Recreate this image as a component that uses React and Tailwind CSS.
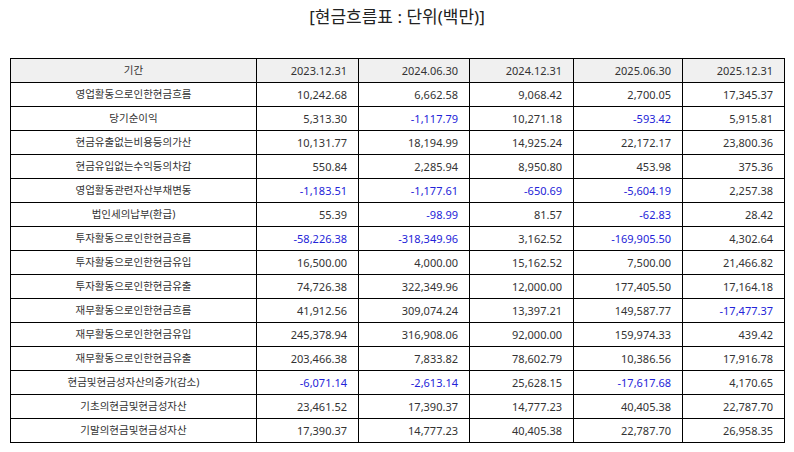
import React from "react";

const cols = ["2023.12.31", "2024.06.30", "2024.12.31", "2025.06.30", "2025.12.31"];
const rows = [
  ["영업활동으로인한현금흐름", "10,242.68", "6,662.58", "9,068.42", "2,700.05", "17,345.37"],
  ["당기순이익", "5,313.30", "-1,117.79", "10,271.18", "-593.42", "5,915.81"],
  ["현금유출없는비용등의가산", "10,131.77", "18,194.99", "14,925.24", "22,172.17", "23,800.36"],
  ["현금유입없는수익등의차감", "550.84", "2,285.94", "8,950.80", "453.98", "375.36"],
  ["영업활동관련자산부채변동", "-1,183.51", "-1,177.61", "-650.69", "-5,604.19", "2,257.38"],
  ["법인세의납부(환급)", "55.39", "-98.99", "81.57", "-62.83", "28.42"],
  ["투자활동으로인한현금흐름", "-58,226.38", "-318,349.96", "3,162.52", "-169,905.50", "4,302.64"],
  ["투자활동으로인한현금유입", "16,500.00", "4,000.00", "15,162.52", "7,500.00", "21,466.82"],
  ["투자활동으로인한현금유출", "74,726.38", "322,349.96", "12,000.00", "177,405.50", "17,164.18"],
  ["재무활동으로인한현금흐름", "41,912.56", "309,074.24", "13,397.21", "149,587.77", "-17,477.37"],
  ["재무활동으로인한현금유입", "245,378.94", "316,908.06", "92,000.00", "159,974.33", "439.42"],
  ["재무활동으로인한현금유출", "203,466.38", "7,833.82", "78,602.79", "10,386.56", "17,916.78"],
  ["현금및현금성자산의증가(감소)", "-6,071.14", "-2,613.14", "25,628.15", "-17,617.68", "4,170.65"],
  ["기초의현금및현금성자산", "23,461.52", "17,390.37", "14,777.23", "40,405.38", "22,787.70"],
  ["기말의현금및현금성자산", "17,390.37", "14,777.23", "40,405.38", "22,787.70", "26,958.35"],
];

const font = { fontFamily: '"Noto Sans", "Noto Sans CJK KR", sans-serif' };

export default function App() {
  return (
    <div
      className="w-[794px] h-[452px] bg-white overflow-hidden"
      style={font}
    >
      <div className="pt-[5px] h-[58px] text-center text-[17px] leading-[24px] text-[#222]">
        [현금흐름표 : 단위(백만)]
      </div>
      <table className="ml-[10px] w-[774px] table-fixed border-collapse text-[11px] text-[#333]">
        <colgroup>
          <col className="w-[246px]" />
          <col className="w-[102px]" />
          <col className="w-[111px]" />
          <col className="w-[104px]" />
          <col className="w-[109px]" />
          <col className="w-[102px]" />
        </colgroup>
        <thead>
          <tr className="h-[24px] bg-[#f0f0f0]">
            <th className="border border-black font-normal text-center p-0 leading-none text-[10.5px]">기간</th>
            {cols.map((c) => (
              <th key={c} className="border border-black font-normal text-right pr-[11px] p-0 leading-none">
                {c}
              </th>
            ))}
          </tr>
        </thead>
        <tbody>
          {rows.map((r) => (
            <tr key={r[0]} className="h-[24px]">
              <td className="border border-black text-center p-0 leading-none text-[10.5px]">{r[0]}</td>
              {r.slice(1).map((v, i) => (
                <td
                  key={i}
                  className={
                    v.startsWith("-")
                      ? "border border-black text-right pr-[11px] p-0 leading-none text-[#2424d8]"
                      : "border border-black text-right pr-[11px] p-0 leading-none"
                  }
                >
                  {v}
                </td>
              ))}
            </tr>
          ))}
        </tbody>
      </table>
    </div>
  );
}
